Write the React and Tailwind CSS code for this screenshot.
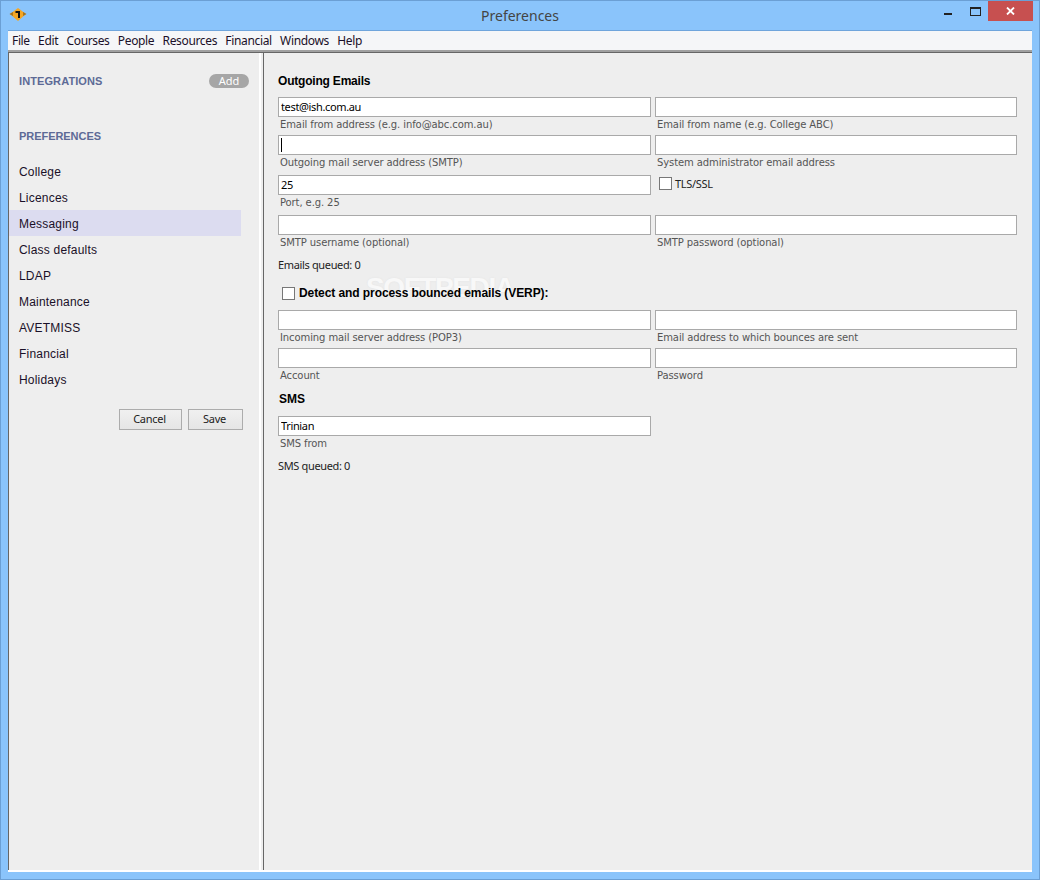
import React from 'react'

const menus = ['File', 'Edit', 'Courses', 'People', 'Resources', 'Financial', 'Windows', 'Help']
const prefs = ['College', 'Licences', 'Messaging', 'Class defaults', 'LDAP', 'Maintenance', 'AVETMISS', 'Financial', 'Holidays']

function Field({ label, value = '', caret = false }) {
  return (
    <div>
      <div className="relative">
        <input
          readOnly
          value={value}
          className="block w-full h-5 bg-white border border-[#a9a9a9] px-[2px] pb-px text-[11px] tracking-[-0.35px] text-black font-['Noto_Sans',sans-serif] outline-none"
        />
        {caret && <div className="absolute left-[3px] top-[3px] w-px h-[14px] bg-black" />}
      </div>
      {label && <div className="mt-[1px] pl-[2px] h-[14px] leading-[14px] text-[10px] tracking-[-0.1px] text-[#555] font-['DejaVu_Sans',sans-serif]">{label}</div>}
    </div>
  )
}

function Box({ className = '' }) {
  return <div className={`w-[13px] h-[13px] bg-white border border-[#777] shrink-0 ${className}`} />
}

function Btn({ children, className = '' }) {
  return (
    <button className={`h-[21px] border border-[#acacac] bg-gradient-to-b from-[#f0f0f0] to-[#e5e5e5] pr-[2px] text-[11px] tracking-[-0.25px] text-[#222] font-['Noto_Sans',sans-serif] ${className}`}>
      {children}
    </button>
  )
}

export default function App() {
  return (
    <div className="w-[1040px] h-[880px] bg-[#8ac4fb] border border-[#6b9fd4] flex flex-col overflow-hidden font-['Liberation_Sans',sans-serif]">
      {/* title bar */}
      <div className="h-[29px] shrink-0 relative flex items-center justify-center text-[14px] text-[#444] font-['Noto_Sans',sans-serif]">
        Preferences
        <svg className="absolute left-[8px] top-[6px]" width="18" height="15" viewBox="0 0 18 15">
          <path d="M9 1 L17 7 L9 14 L1 7 Z" fill="#f5a623" />
          <path d="M0.5 7 L4 5 L4 9 Z M17.5 7 L14 5 L14 9 Z" fill="#a8741c" />
          <path d="M6.5 5 L10 5 L10 11" stroke="#111" strokeWidth="2" fill="none" />
        </svg>
        <div className="absolute left-[943px] top-[12px] w-2 h-[2px] bg-[#222]" />
        <div className="absolute left-[969px] top-[6px] w-[11px] h-[9px] border border-[#222] border-t-2" />
        <div className="absolute left-[987px] top-0 w-[45px] h-5 bg-[#c75050] flex items-center justify-center">
          <svg width="9" height="8" viewBox="0 0 9 8">
            <path d="M1 0.5 L8 7.5 M8 0.5 L1 7.5" stroke="#fff" strokeWidth="1.8" />
          </svg>
        </div>
      </div>

      {/* client area */}
      <div className="ml-[7px] mr-[7px] h-[842px] flex flex-col bg-[#eeeeee] border-t border-[#6fa5dc]">
        <div className="h-[19px] shrink-0 flex items-center gap-[8.3px] pl-[4px] bg-[#f5f6f8] text-[12px] tracking-[-0.35px] text-[#1a1028] font-['Noto_Sans',sans-serif]">
          {menus.map(m => <span key={m}>{m}</span>)}
        </div>
        <div className="h-[2px] shrink-0 bg-[#a0a0a0]" />
        <div className="flex-1 flex min-h-0 border-t border-[#666] border-b-2 border-b-white">
          {/* sidebar */}
          <aside className="w-[253px] shrink-0 border-l border-[#666] border-r-2 border-r-white flex flex-col">
            <div className="mt-[20px] pl-[10px] pr-[10px] h-4 flex items-center justify-between">
              <span className="text-[11px] tracking-[0.1px] font-bold text-[#5d6a96]">INTEGRATIONS</span>
              <span className="w-10 h-[14px] rounded-full bg-[#a6a6a6] text-white text-[11px] leading-[14px] text-center font-['Noto_Sans',sans-serif]">Add</span>
            </div>
            <div className="mt-[39px] pl-[10px] h-4 flex items-center text-[11px] tracking-[-0.05px] font-bold text-[#5d6a96]">PREFERENCES</div>
            <div className="mt-[14px] flex flex-col">
              {prefs.map(p => (
                <div key={p} className={`w-[232px] h-[26px] pl-[10px] pt-[2px] flex items-center text-[12px] tracking-[0.2px] text-[#1a1028] ${p === 'Messaging' ? 'bg-[#dcdcf0]' : ''}`}>{p}</div>
              ))}
            </div>
            <div className="mt-[17px] pl-[110px] flex gap-[6px]">
              <Btn className="w-[63px]">Cancel</Btn>
              <Btn className="w-[55px]">Save</Btn>
            </div>
          </aside>
          <div className="w-[2px] shrink-0" />
          <div className="w-px shrink-0 bg-[#666]" />

          {/* form */}
          <main className="relative flex-1 pl-[14px] pt-[20px] min-w-0">
            {/* watermark */}
            <div className="absolute left-[102px] top-[221px] text-[28px] leading-none font-bold tracking-[-1.4px] text-[#f8f8f8] [text-shadow:0_0_2px_#e2e2e2] pointer-events-none">SOFTPEDIA<sup className="text-[8px] font-normal">®</sup></div>

            <div className="relative">
              <div className="h-4 flex items-center text-[12px] tracking-[-0.2px] font-bold text-black">Outgoing Emails</div>
              <div className="mt-[8px] grid grid-cols-[373px_362px] gap-x-1">
                <Field value="test@ish.com.au" label="Email from address (e.g. info@abc.com.au)" />
                <Field label="Email from name (e.g. College ABC)" />
              </div>
              <div className="mt-[3px] grid grid-cols-[373px_362px] gap-x-1">
                <Field caret label="Outgoing mail server address (SMTP)" />
                <Field label="System administrator email address" />
              </div>
              <div className="mt-[5px] grid grid-cols-[373px_362px] gap-x-1">
                <Field value="25" label="Port, e.g. 25" />
                <div className="flex items-start pl-[4px] pt-[2px] gap-[3px]">
                  <Box />
                  <span className="text-[11px] leading-[13px] tracking-[-0.3px] text-[#222] font-['Noto_Sans',sans-serif]">TLS/SSL</span>
                </div>
              </div>
              <div className="mt-[5px] grid grid-cols-[373px_362px] gap-x-1">
                <Field label="SMTP username (optional)" />
                <Field label="SMTP password (optional)" />
              </div>
              <div className="mt-[8px] h-[14px] leading-[14px] text-[11px] tracking-[-0.35px] text-[#222] font-['Noto_Sans',sans-serif]">Emails queued: 0</div>
              <div className="mt-[13px] pl-1 h-4 flex items-center gap-[4px] text-[12px] tracking-[-0.08px] font-bold text-black">
                <Box />
                Detect and process bounced emails (VERP):
              </div>
              <div className="mt-[9px] grid grid-cols-[373px_362px] gap-x-1">
                <Field label="Incoming mail server address (POP3)" />
                <Field label="Email address to which bounces are sent" />
              </div>
              <div className="mt-[3px] grid grid-cols-[373px_362px] gap-x-1">
                <Field label="Account" />
                <Field label="Password" />
              </div>
              <div className="mt-[8px] h-4 flex items-center pl-px text-[12px] font-bold text-black">SMS</div>
              <div className="mt-[9px] w-[373px]">
                <Field value="Trinian" label="SMS from" />
              </div>
              <div className="mt-[8px] h-[14px] leading-[14px] text-[11px] tracking-[-0.35px] text-[#222] font-['Noto_Sans',sans-serif]">SMS queued: 0</div>
            </div>
          </main>
        </div>
      </div>
    </div>
  )
}
